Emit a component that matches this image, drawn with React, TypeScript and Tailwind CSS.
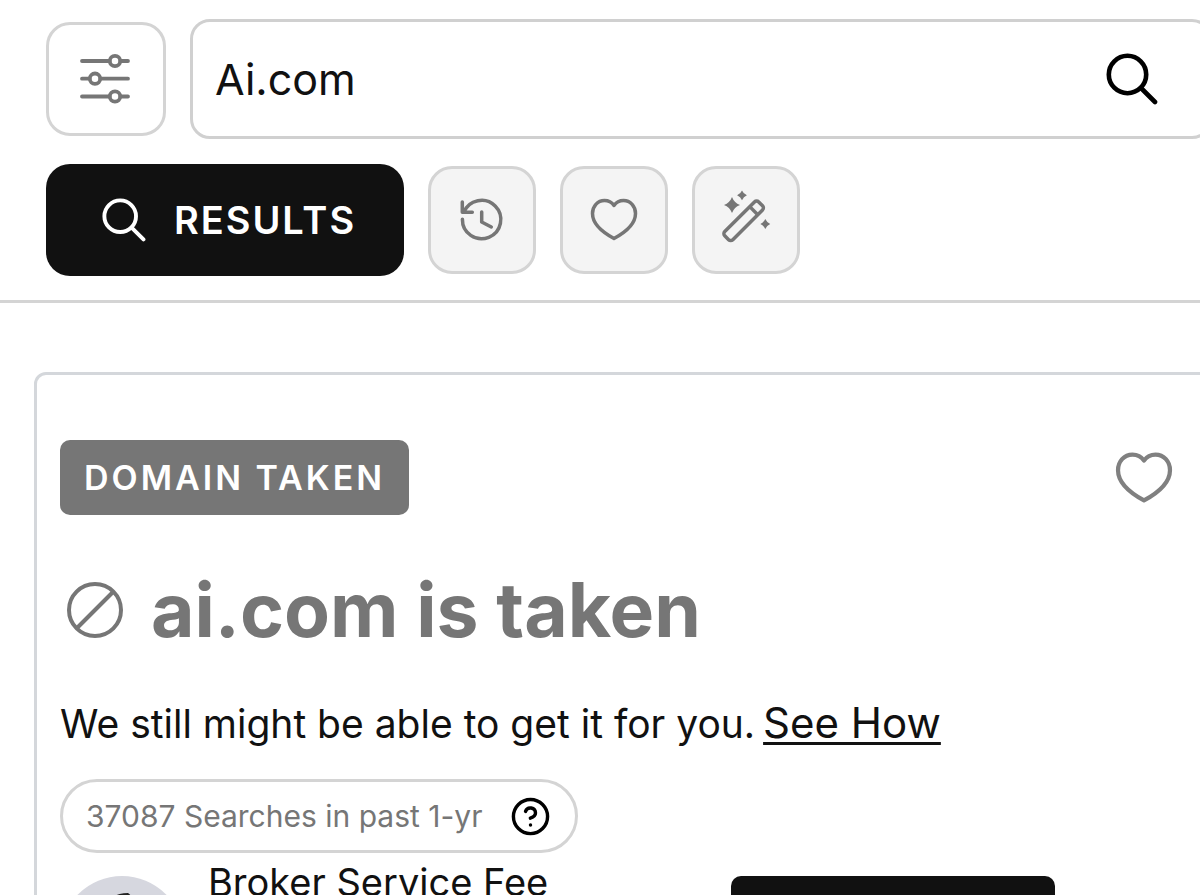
import React, { useState } from 'react';
import { CircleHelp } from 'lucide-react';

type IconProps = {
  className?: string;
};

function SlidersIcon({ className }: IconProps) {
  return (
    <svg viewBox="1 0 54 54" className={className} fill="none" stroke="currentColor" strokeWidth="3.8" strokeLinecap="round" aria-hidden="true">
      <path d="M4 9H31.5M42.5 9H50" />
      <circle cx="37" cy="9" r="5.2" />
      <path d="M4 26.7H11.5M22.5 26.7H50" />
      <circle cx="17" cy="26.7" r="5.2" />
      <path d="M4 44.5H31.5M42.5 44.5H50" />
      <circle cx="37" cy="44.5" r="5.2" />
    </svg>
  );
}

function SearchIcon({ className }: IconProps) {
  return (
    <svg viewBox="0 0 52 52" className={className} fill="none" stroke="currentColor" strokeWidth="4.6" strokeLinecap="round" aria-hidden="true">
      <circle cx="21.5" cy="21.5" r="18.7" />
      <path d="M35 35L49 49" />
    </svg>
  );
}

function HistoryIcon({ className }: IconProps) {
  return (
    <svg viewBox="0 0 48 48" className={className} fill="none" stroke="currentColor" strokeWidth="3.5" strokeLinecap="round" strokeLinejoin="round" aria-hidden="true">
      <path d="M5.8 16.3A19.2 19.2 0 1 1 4.4 23.2" />
      <path d="M4.3 6V16.3H14.3" />
      <path d="M23.7 16V26L33.3 31" />
    </svg>
  );
}

function HeartIcon({ className }: IconProps) {
  return (
    <svg viewBox="0 0 48 48" className={className} fill="none" stroke="currentColor" strokeWidth="3.5" strokeLinejoin="round" aria-hidden="true">
      <path d="M24 9.5C21.5 6 18 4.6 14.5 4.6C7.5 4.6 2.5 10.5 2.5 17.5C2.5 27.5 12 36 24 42.5C36 36 45.5 27.5 45.5 17.5C45.5 10.5 40.5 4.6 33.5 4.6C30 4.6 26.5 6 24 9.5Z" />
    </svg>
  );
}

function WandIcon({ className }: IconProps) {
  return (
    <svg viewBox="-5 -6 60 60" className={className} fill="none" stroke="currentColor" strokeWidth="3.5" strokeLinejoin="round" aria-hidden="true">
      <g transform="rotate(-45 23 24)">
        <rect x="-1.8" y="18.6" width="48" height="11.4" rx="3" />
        <path d="M36.5 18.6V30" />
      </g>
      <g fill="currentColor" stroke="none">
        <path d="M11 1Q13.2 6.8 19 9Q13.2 11.2 11 17Q8.8 11.2 3 9Q8.8 6.8 11 1Z" />
        <path d="M21-5.6Q22.5-2.2 25.9-.7Q22.5 .8 21 4.2Q19.5 .8 16.1-.7Q19.5-2.2 21-5.6Z" />
        <path d="M44.3 23.1Q45.8 26.5 49.2 28Q45.8 29.5 44.3 32.9Q42.8 29.5 39.4 28Q42.8 26.5 44.3 23.1Z" />
      </g>
    </svg>
  );
}

function TakenIcon({ className }: IconProps) {
  return (
    <svg viewBox="0 0 56 56" className={className} fill="none" stroke="currentColor" strokeWidth="4" aria-hidden="true">
      <circle cx="28" cy="28" r="26" />
      <path d="M10 46L46 10" />
    </svg>
  );
}

function BrokerAvatar({ className }: IconProps) {
  return (
    <svg viewBox="0 0 124 124" className={className} role="img" aria-label="Broker">
      <circle cx="62" cy="62" r="62" fill="#d6d7df" />
      <path d="M46 34C47 22 56 17 68 17C70 18 71 20 71 21C80 24 82 32 80 42H46Z" fill="#222222" />
      <path d="M48 36H78V52C78 62 71 68 63 68S48 62 48 52Z" fill="#c99f83" />
      <path d="M20 107C24 84 40 76 62 76S100 84 104 107A62 62 0 0 1 20 107Z" fill="#333333" />
    </svg>
  );
}

const tools = [
  { label: 'Search history', Icon: HistoryIcon, iconClass: 'size-12' },
  { label: 'Favorites', Icon: HeartIcon, iconClass: 'size-12' },
  { label: 'Name generator', Icon: WandIcon, iconClass: 'size-[60px]' },
];

export default function App() {
  const [query, setQuery] = useState('Ai.com');
  const [liked, setLiked] = useState(false);

  return (
    <div className="min-h-screen overflow-x-hidden bg-white font-['HK_Grotesk','Inter',sans-serif] text-[#111111]">
      <header className="flex flex-col gap-[25px] border-b-3 border-[#d4d4d4] pt-[19px] pb-6 pl-[46px]">
        <form
          className="-mr-3 flex items-center gap-6"
          onSubmit={(e) => e.preventDefault()}
        >
          <button
            type="button"
            aria-label="Filters"
            className="flex h-[114px] w-[120px] shrink-0 items-center justify-center rounded-3xl border-3 border-[#d4d4d4] text-[#767676]"
          >
            <SlidersIcon className="size-[54px]" />
          </button>
          <div className="flex h-[120px] min-w-0 flex-1 items-center rounded-[20px] border-3 border-[#d0d0d0] pr-[51px] pl-[22px]">
            <input
              aria-label="Search for a domain"
              className="min-w-0 flex-1 text-[43px] outline-none"
              value={query}
              onChange={(e) => setQuery(e.target.value)}
            />
            <button type="submit" aria-label="Search" className="text-black">
              <SearchIcon className="size-[52px]" />
            </button>
          </div>
        </form>

        <nav className="flex items-center gap-6">
          <button
            type="button"
            className="flex h-28 w-[358px] items-center justify-center gap-7 rounded-3xl bg-[#111111] pl-2 text-[38px] font-semibold tracking-[2px] text-white"
          >
            <SearchIcon className="size-11" />
            RESULTS
          </button>
          {tools.map(({ label, Icon, iconClass }) => (
            <button
              key={label}
              type="button"
              aria-label={label}
              className="flex size-[108px] items-center justify-center rounded-3xl border-3 border-[#d4d4d4] bg-[#f4f4f4] text-[#767676]"
            >
              <Icon className={iconClass} />
            </button>
          ))}
        </nav>
      </header>

      <main className="-mr-3 pt-[69px] pl-[34px]">
        <section className="rounded-xl border-3 border-[#d4d7db] pt-[65px] pr-9 pb-16 pl-[23px]">
          <div className="flex items-center justify-between">
            <span className="flex h-[75px] items-center rounded-[10px] bg-[#767676] px-6 text-[34px] font-semibold tracking-[3px] text-white">
              DOMAIN TAKEN
            </span>
            <button
              type="button"
              aria-label="Save ai.com"
              aria-pressed={liked}
              onClick={() => setLiked(!liked)}
              className="text-[#808080]"
            >
              <HeartIcon className="size-[58px]" />
            </button>
          </div>

          <h1 className="mt-[55px] flex h-20 items-center gap-7 pl-[7px] text-[75px] font-bold text-[#767676]">
            <TakenIcon className="size-14" />
            ai.com is taken
          </h1>

          <p className="mt-[46px] flex h-[54px] items-baseline gap-2 text-[39px] leading-[54px]">
            We still might be able to get it for you.
            <a href="#broker" className="text-[42px] underline decoration-3 underline-offset-4">
              See How
            </a>
          </p>

          <div className="mt-[29px] flex h-[74px] w-fit items-center gap-7 rounded-full border-3 border-[#d4d4d4] pr-6 pl-[23px] text-[30px] text-[#767676]">
            37087 Searches in past 1-yr
            <button type="button" aria-label="About searches" className="text-black">
              <CircleHelp className="size-[41px]" />
            </button>
          </div>

          <div id="broker" className="flex items-start">
            <BrokerAvatar className="mt-[23px] size-[124px] shrink-0" />
            <h2 className="ml-6 w-[523px] pt-0.5 text-[38px] leading-[54px]">Broker Service Fee</h2>
            <button
              type="button"
              aria-label="Add to cart"
              className="mt-[23px] h-28 w-[324px] rounded-[10px] bg-[#111111]"
            />
          </div>
        </section>
      </main>
    </div>
  );
}
